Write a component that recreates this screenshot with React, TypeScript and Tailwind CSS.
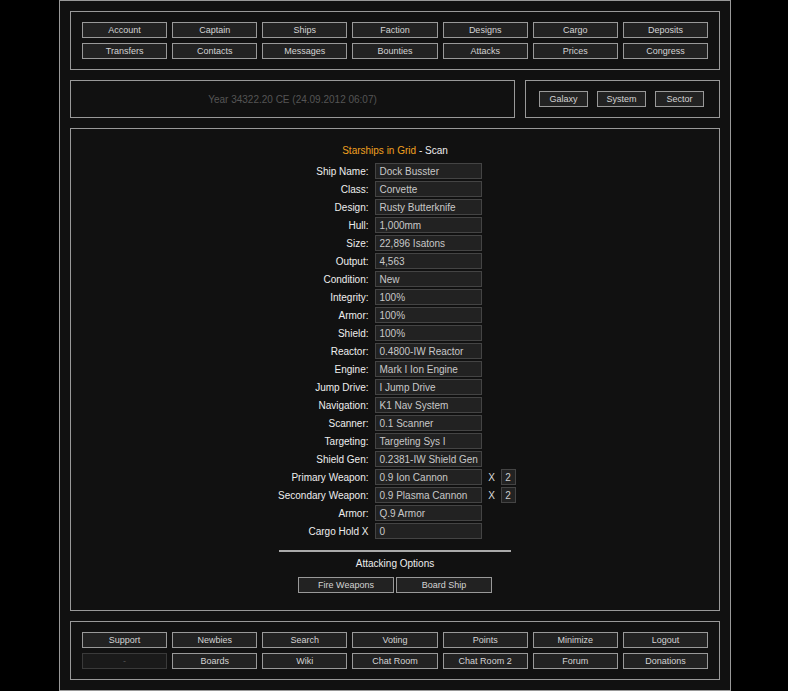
import type { ReactNode } from 'react';

const topNav = [
    'Account', 'Captain', 'Ships', 'Faction', 'Designs', 'Cargo', 'Deposits',
    'Transfers', 'Contacts', 'Messages', 'Bounties', 'Attacks', 'Prices', 'Congress',
];

const bottomNav = [
    'Support', 'Newbies', 'Search', 'Voting', 'Points', 'Minimize', 'Logout',
    '-', 'Boards', 'Wiki', 'Chat Room', 'Chat Room 2', 'Forum', 'Donations',
];

type Field = { label: string; value: string; count?: string };

const fields: Field[] = [
    { label: 'Ship Name:', value: 'Dock Busster' },
    { label: 'Class:', value: 'Corvette' },
    { label: 'Design:', value: 'Rusty Butterknife' },
    { label: 'Hull:', value: '1,000mm' },
    { label: 'Size:', value: '22,896 Isatons' },
    { label: 'Output:', value: '4,563' },
    { label: 'Condition:', value: 'New' },
    { label: 'Integrity:', value: '100%' },
    { label: 'Armor:', value: '100%' },
    { label: 'Shield:', value: '100%' },
    { label: 'Reactor:', value: '0.4800-IW Reactor' },
    { label: 'Engine:', value: 'Mark I Ion Engine' },
    { label: 'Jump Drive:', value: 'I Jump Drive' },
    { label: 'Navigation:', value: 'K1 Nav System' },
    { label: 'Scanner:', value: '0.1 Scanner' },
    { label: 'Targeting:', value: 'Targeting Sys I' },
    { label: 'Shield Gen:', value: '0.2381-IW Shield Gen' },
    { label: 'Primary Weapon:', value: '0.9 Ion Cannon', count: '2' },
    { label: 'Secondary Weapon:', value: '0.9 Plasma Cannon', count: '2' },
    { label: 'Armor:', value: 'Q.9 Armor' },
    { label: 'Cargo Hold X', value: '0' },
];

function NavButton({ children, disabled }: { children: ReactNode; disabled?: boolean }) {
    return (
        <div
            className={
                disabled
                    ? 'flex h-[16px] items-center justify-center whitespace-nowrap border border-[#3a3a3a] bg-[#1a1a1a] text-[9px] leading-none text-[#555]'
                    : 'flex h-[16px] items-center justify-center whitespace-nowrap border border-[#999] bg-[#222] text-[9px] leading-none text-[#d4d4d4]'
            }
        >
            {children}
        </div>
    );
}

function NavBox({ items }: { items: string[] }) {
    return (
        <div className="border border-[#999] px-[11px] py-[10px]">
            <div className="grid grid-cols-7 gap-[5px]">
                {items.map((item, i) => (
                    <NavButton key={i} disabled={item === '-'}>
                        {item}
                    </NavButton>
                ))}
            </div>
        </div>
    );
}

export default function App() {
    return (
        <div className="h-[691px] w-full bg-black" style={{ fontFamily: '"Liberation Sans", Arial, sans-serif' }}>
            <div className="ml-[59px] flex h-[691px] w-[672px] flex-col gap-[10px] border border-[#999] bg-[#111] p-[10px]">
                <NavBox items={topNav} />

                <div className="flex h-[38px] gap-[10px]">
                    <div className="flex w-[445px] items-center justify-center whitespace-nowrap border border-[#999] text-[10px] text-[#555]">
                        Year 34322.20 CE (24.09.2012 06:07)
                    </div>
                    <div className="flex flex-1 items-start justify-center gap-[9px] border border-[#999] pt-[10px] pr-[2px]">
                        {['Galaxy', 'System', 'Sector'].map((s) => (
                            <div key={s} className="w-[49px]">
                                <NavButton>{s}</NavButton>
                            </div>
                        ))}
                    </div>
                </div>

                <div className="flex flex-1 flex-col items-center border border-[#999] pt-[14px]">
                    <div className="h-[16px] whitespace-nowrap text-[10px] leading-[16px] text-[#eee]">
                        <span className="text-[#f0a020]">Starships in Grid</span> - Scan
                    </div>
                    <div className="mt-[4px] flex flex-col gap-[2px]">
                        {fields.map((f, i) => (
                            <div key={i} className="flex h-[16px] items-center">
                                <div className="flex w-[94px] justify-end whitespace-nowrap text-[10px] text-[#eee]">
                                    {f.label}
                                </div>
                                <div className="ml-[6px] flex h-[16px] w-[107px] items-center overflow-hidden whitespace-nowrap border border-[#444] bg-[#222] pl-[4px] text-[10px] text-[#c8c8c8]">
                                    {f.value}
                                </div>
                                <div className="ml-[5px] flex w-[29px] items-center">
                                    {f.count ? (
                                        <>
                                            <span className="w-[10px] text-center text-[10px] text-[#ddd]">X</span>
                                            <span className="ml-[4px] flex h-[16px] w-[15px] items-center justify-center border border-[#444] bg-[#222] text-[10px] text-[#ccc]">
                                                {f.count}
                                            </span>
                                        </>
                                    ) : null}
                                </div>
                            </div>
                        ))}
                    </div>
                    <div className="mt-[11px] h-[2px] w-[232px] bg-[#aaa]" />
                    <div className="mt-[5px] whitespace-nowrap text-[10px] leading-[14px] text-[#eee]">Attacking Options</div>
                    <div className="mt-[6px] flex gap-[2px]">
                        <div className="w-[96px]">
                            <NavButton>Fire Weapons</NavButton>
                        </div>
                        <div className="w-[96px]">
                            <NavButton>Board Ship</NavButton>
                        </div>
                    </div>
                </div>

                <NavBox items={bottomNav} />
            </div>
        </div>
    );
}
